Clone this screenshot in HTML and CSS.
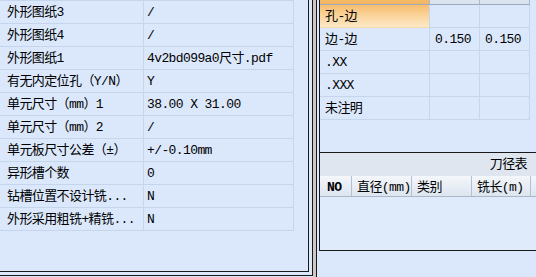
FILE: index.html
```html
<!DOCTYPE html>
<html lang="zh-CN">
<head>
  <meta charset="UTF-8" />
  <title>单元参数</title>
  <link rel="stylesheet" href="styles.css">
</head>
<body>
  <div class="window">
    <!-- Left: property grid -->
    <div class="left-pane">
      <div class="left-inner">
        <div class="props">
          <div class="label">外形图纸3</div><div class="value">/</div>
          <div class="label">外形图纸4</div><div class="value">/</div>
          <div class="label">外形图纸1</div><div class="value">4v2bd099a0尺寸.pdf</div>
          <div class="label">有无内定位孔（Y/N）</div><div class="value">Y</div>
          <div class="label">单元尺寸（mm）1</div><div class="value">38.00 X 31.00</div>
          <div class="label">单元尺寸（mm）2</div><div class="value">/</div>
          <div class="label">单元板尺寸公差（±）</div><div class="value">+/-0.10mm</div>
          <div class="label">异形槽个数</div><div class="value">0</div>
          <div class="label">钻槽位置不设计铣...</div><div class="value">N</div>
          <div class="label">外形采用粗铣+精铣...</div><div class="value">N</div>
        </div>
      </div>
    </div>

    <div class="splitter"></div>

    <!-- Right: tolerance grid + tool table -->
    <div class="right-pane">
      <div class="right-inner">
        <div class="tol-area">
          <div class="tol">
            <div class="head sel">公差</div><div class="head">上限</div><div class="head">下限</div>
            <div class="cell sel">孔-边</div><div class="cell"></div><div class="cell"></div>
            <div class="cell">边-边</div><div class="cell">0.150</div><div class="cell">0.150</div>
            <div class="cell">.XX</div><div class="cell"></div><div class="cell"></div>
            <div class="cell">.XXX</div><div class="cell"></div><div class="cell"></div>
            <div class="cell">未注明</div><div class="cell"></div><div class="cell"></div>
          </div>
        </div>
        <div class="tool-panel">
          <div class="tool-title">刀径表</div>
          <div class="tool-head">
            <div class="no">NO</div>
            <div>直径(mm)</div>
            <div>类别</div>
            <div>铣长(m)</div>
            <div></div>
          </div>
          <div class="tool-body"></div>
        </div>
      </div>
    </div>
  </div>
</body>
</html>
```

FILE: styles.css
```css
/* Reset & Base */
* { margin: 0; padding: 0; box-sizing: border-box; }
html, body {
  width: 100%; height: 100%; overflow: hidden; background: #dbe8fb; color: #000;
  font-family: "Liberation Mono", "Noto Sans CJK SC", monospace; font-size: 13px; letter-spacing: -0.6px;
}
.window { display: flex; height: 277px; }

/* Left pane (double frame) */
.left-pane {
  width: 315px; height: 276px; display: flex; padding: 0 3px 3px 0;
  border-right: 1px solid #1a1a1a; border-bottom: 1px solid #1a1a1a;
}
.left-inner { flex: 1; border-right: 1px solid #1a1a1a; border-bottom: 1px solid #1a1a1a; }

/* Property grid */
.props { display: grid; grid-template-columns: 144px 150px; width: 294px; border-top: 1px solid #c5d5eb; }
.props div {
  height: 23px; line-height: 24px; padding-left: 3px; white-space: nowrap; overflow: hidden;
  border-right: 1px solid #c5d5eb; border-bottom: 1px solid #c5d5eb;
}
.props .label { padding-left: 7px; }

/* Splitter */
.splitter { width: 3px; background: #ccc9c2; }

/* Right pane */
.right-pane { flex: 1; display: flex; align-items: flex-start; padding-left: 2px; border-left: 1px solid #1a1a1a; }
.right-inner {
  flex: 1; height: 251px; display: flex; flex-direction: column;
  border-left: 1px solid #1a1a1a; border-bottom: 1px solid #1a1a1a;
}
.tol-area { flex: 1; overflow: hidden; }

/* Tolerance grid (scrolled so only the header's bottom edge shows) */
.tol { display: grid; grid-template-columns: 110px 50px 50px; width: 210px; margin-top: -19px; }
.tol div { white-space: nowrap; overflow: hidden; padding-left: 5px; border-right: 1px solid #c5d5eb; }
.tol .head {
  height: 24px; line-height: 26px; color: #333;
  background: linear-gradient(#eef3f9, #d9e2ee); border-bottom: 1px solid #9aabc1; border-right-color: #aab8ca;
}
.tol .head.sel { background: linear-gradient(#fbd59b, #f4b55f); }
.tol .cell { height: 23px; line-height: 24px; border-bottom: 1px solid #c5d5eb; }
.tol .cell.sel { background: linear-gradient(#f7bd6e, #fbd7a1 55%, #fde8c6); border-bottom-color: #f3d9b0; }

/* Tool table */
.tool-panel { height: 98px; display: flex; flex-direction: column; border-top: 1px solid #1a1a1a; }
.tool-title { height: 23px; line-height: 23px; text-align: right; padding-right: 9px; background: #dfe6f0; }
.tool-head {
  height: 21px; display: grid; grid-template-columns: 32px 60px 60px 59px 1fr;
  background: linear-gradient(#f4f7fb, #dde5f0); border-bottom: 1px solid #aab7c8;
}
.tool-head div { padding: 4px 0 0 5px; line-height: 16px; white-space: nowrap; border-right: 1px solid #b4c1d2; }
.tool-head .no { padding-left: 7px; font-weight: bold; }
.tool-head div:last-child { border-right: none; }
.tool-body { flex: 1; background: #dfeafb; }
```
